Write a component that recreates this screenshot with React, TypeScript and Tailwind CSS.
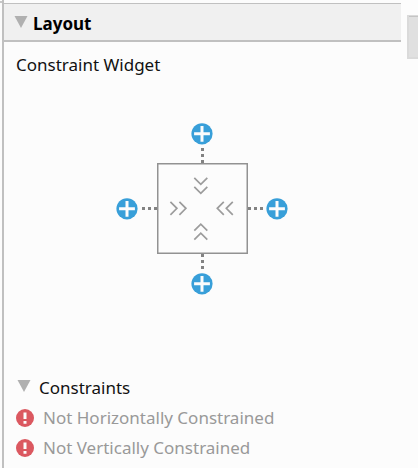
type Side = "top" | "left" | "right" | "bottom";

function Triangle() {
  return (
    <svg aria-hidden="true" viewBox="0 0 14 16" className="h-4 w-3.5 shrink-0">
      <path d="M0.5 0H13.5L7 12Z" fill="#b0b0b0" />
    </svg>
  );
}

function AddButton({ side }: { side: Side }) {
  return (
    <button type="button" aria-label={`Add ${side} constraint`} className="block size-[21px]">
      <svg viewBox="0 0 21 21" className="size-full overflow-visible">
        <circle cx="10" cy="10.8" r="10.6" fill="#389fd9" />
        <path d="M10 2.9V18.7M2.1 10.8H17.9" stroke="#fcfcfc" strokeWidth="3" />
      </svg>
    </button>
  );
}

function Dots({ side }: { side: Side }) {
  const vertical = side === "top" || side === "bottom";
  const offsets = side === "top" || side === "left" ? [4, 10, 16] : [0, 6, 12];
  return (
    <svg aria-hidden="true" className={vertical ? "h-[19px] w-[3px]" : "h-[3px] w-[19px]"}>
      {offsets.map((o) => (
        <rect key={o} x={vertical ? 0 : o} y={vertical ? o : 0} width="3" height="3" fill="#828282" />
      ))}
    </svg>
  );
}

function ConstraintWidget() {
  return (
    <div className="flex flex-col items-center">
      <AddButton side="top" />
      <Dots side="top" />
      <div className="flex items-center">
        <AddButton side="left" />
        <Dots side="left" />
        <svg viewBox="0 0 91 91" className="size-[91px]" role="img" aria-label="View size">
          <rect x="0.75" y="0.75" width="89.5" height="89.5" fill="none" stroke="#929292" strokeWidth="1.5" />
          <path
            d="M37.3 14.8L43.8 21.3L50.3 14.8M37.3 23.8L43.8 30.3L50.3 23.8M37.3 67.7L43.8 61.2L50.3 67.7M37.3 76.7L43.8 70.2L50.3 76.7M13.4 38.8L19.9 45.3L13.4 51.8M22.4 38.8L28.9 45.3L22.4 51.8M66.8 38.8L60.3 45.3L66.8 51.8M75.8 38.8L69.3 45.3L75.8 51.8"
            fill="none"
            stroke="#9c9c9c"
            strokeWidth="1.7"
          />
        </svg>
        <Dots side="right" />
        <AddButton side="right" />
      </div>
      <Dots side="bottom" />
      <AddButton side="bottom" />
    </div>
  );
}

function Warning({ text }: { text: string }) {
  return (
    <li className="flex h-[30px] items-center gap-[9px] text-[#999999]">
      <svg aria-hidden="true" viewBox="0 0 18 18" className="size-[18px] shrink-0">
        <circle cx="9" cy="9" r="9" fill="#db5860" />
        <path d="M7.5 3.5H10.5V10H7.5ZM7.5 12H10.5V14.8H7.5Z" fill="#fcfcfc" />
      </svg>
      <span>{text}</span>
    </li>
  );
}

export default function App() {
  return (
    <div className="flex min-h-screen bg-[#fcfcfc] font-['Noto_Sans','Open_Sans',sans-serif] text-[17px] leading-6 text-[#111111]">
      <div className="h-[3px] w-0.5 shrink-0 border-b-2 border-[#c8c8c8]" />
      <main className="min-w-0 flex-1 border-l-2 border-[#c0c0c0] pt-[3px]">
        <h1 className="border-t border-b-2 border-[#c0c0c0] bg-[#f0f0f0] font-bold text-black">
          <button type="button" aria-expanded="true" className="flex h-9 w-full items-center gap-[5px] pt-1 pl-2.5">
            <Triangle />
            Layout
          </button>
        </h1>
        <h2 className="px-3 pt-[11px]">Constraint Widget</h2>
        <div className="pt-[46px]">
          <ConstraintWidget />
        </div>
        <section className="pt-[79px]">
          <h2>
            <button type="button" aria-expanded="true" className="flex h-[30px] items-center gap-2 pl-[13px]">
              <Triangle />
              Constraints
            </button>
          </h2>
          <ul className="px-3">
            <Warning text="Not Horizontally Constrained" />
            <Warning text="Not Vertically Constrained" />
          </ul>
        </section>
      </main>
      <aside className="w-[17px] shrink-0 pt-[15px] pl-1.5">
        <div className="h-11 border-t border-b-2 border-l-2 border-[#dadada] bg-[#e0e0e0]">
          <div className="h-px bg-[#c4c4c4]" />
        </div>
      </aside>
    </div>
  );
}
